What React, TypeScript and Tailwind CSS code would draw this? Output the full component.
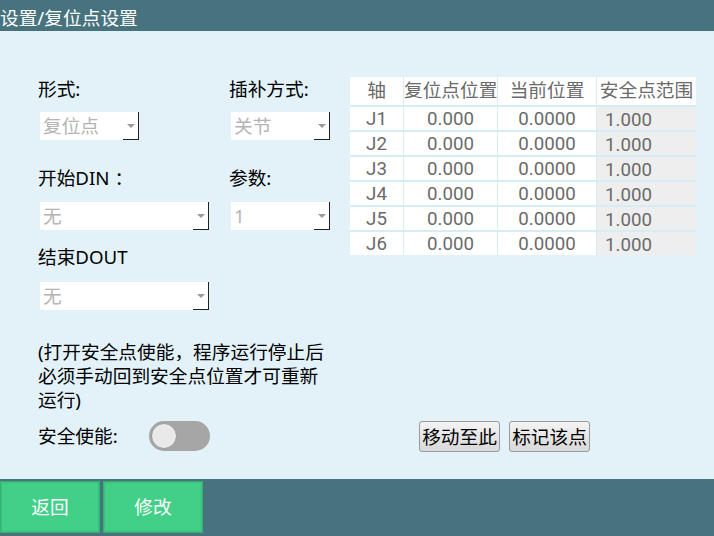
import React from 'react';

const FONT = { fontFamily: '"Noto Sans", "Noto Sans CJK SC", sans-serif' };
const TABLE_FONT = { fontFamily: 'Roboto, "Noto Sans CJK SC", sans-serif' };

const rows = ['J1', 'J2', 'J3', 'J4', 'J5', 'J6'];

const Select = ({ value, wide }: { value: string; wide?: boolean }) => (
  <div className={`ml-[2px] flex h-[28px] bg-white ${wide ? 'w-[169px]' : 'w-[99px]'}`}>
    <span className="flex-1 pl-[3px] text-[18.7px] leading-[28px] text-[#b4b4b4]">{value}</span>
    <div className="flex w-[16px] items-center justify-center border-r border-b border-[#222]">
      <div className="h-0 w-0 border-x-[4px] border-t-[4px] border-x-transparent border-t-[#9a9a9a]" />
    </div>
  </div>
);

const Label = ({ children }: { children: React.ReactNode }) => (
  <div className="text-[18.7px] leading-[24px] text-black">{children}</div>
);

export default function App() {
  return (
    <div className="flex h-[536px] w-[714px] flex-col bg-[#e2f2f8]" style={FONT}>
      <header className="h-[31px] bg-[#47737f] pt-[6px] text-[18.7px] leading-[24px] text-white">设置/复位点设置</header>

      <main className="flex flex-1 pl-[38px] pt-[46px]">
        <div className="w-[312px]">
          <div className="grid grid-cols-[191px_1fr]">
            <Label>形式:</Label>
            <Label>插补方式:</Label>
            <div className="mt-[11px]"><Select value="复位点" /></div>
            <div className="mt-[11px]"><Select value="关节" /></div>
            <div className="mt-[26px]"><Label>开始DIN ：</Label></div>
            <div className="mt-[26px]"><Label>参数:</Label></div>
            <div className="col-span-2 mt-[12px] flex">
              <div className="w-[191px]"><Select value="无" wide /></div>
              <Select value="1" />
            </div>
          </div>
          <div className="mt-[15px]"><Label>结束DOUT</Label></div>
          <div className="mt-[13px]"><Select value="无" wide /></div>

          <div className="mt-[30px] text-[18.7px] leading-[24px] text-black">
            (打开安全点使能，程序运行停止后<br />
            必须手动回到安全点位置才可重新<br />
            运行)
          </div>

          <div className="mt-[9px] flex h-[30px] items-center">
            <span className="w-[111px] text-[18.7px] leading-[24px] text-black">安全使能:</span>
            <div className="flex h-[30px] w-[61px] items-center rounded-full bg-[#a6a6a6] pl-[2px]">
              <div className="h-[26px] w-[26px] rounded-full border border-[#999] bg-[#e9e9e9]" />
            </div>
          </div>
        </div>

        <div className="flex flex-col">
          <div
            className="grid w-[346px] grid-cols-[53px_93px_98px_99px] gap-x-px gap-y-[2px] bg-[#d6edf5] text-[18.7px] text-[#6a6a6a]"
            style={TABLE_FONT}
          >
            {['轴', '复位点位置', '当前位置', '安全点范围'].map((h) => (
              <div key={h} className="h-[28px] bg-white text-center leading-[28px] whitespace-nowrap">{h}</div>
            ))}
            {rows.map((j) => (
              <React.Fragment key={j}>
                <div className="h-[23px] bg-white text-center leading-[25px]">{j}</div>
                <div className="h-[23px] bg-white text-center leading-[25px]">0.000</div>
                <div className="h-[23px] bg-white text-center leading-[25px]">0.0000</div>
                <div className="h-[23px] bg-[#eeeeee] pl-[8px] leading-[27px]">1.000</div>
              </React.Fragment>
            ))}
          </div>

          <div className="ml-[69px] mt-[166px] flex gap-[9px]">
            {['移动至此', '标记该点'].map((b) => (
              <button
                key={b}
                className="h-[31px] w-[81px] rounded-[3px] border border-[#9a9a9a] bg-gradient-to-b from-[#f4f4f4] to-[#d8d8d8] text-[18.7px] leading-[29px] text-black"
              >
                {b}
              </button>
            ))}
          </div>
        </div>
      </main>

      <footer className="flex h-[57px] gap-[3px] bg-[#47737f] pt-[2px]">
        {['返回', '修改'].map((b) => (
          <button
            key={b}
            className="h-[52px] w-[100px] border border-[#34b272] bg-[#42cf88] text-[18.7px] text-white shadow-[inset_0_0_2px_rgba(0,0,0,0.25)]"
          >
            {b}
          </button>
        ))}
      </footer>
    </div>
  );
}
